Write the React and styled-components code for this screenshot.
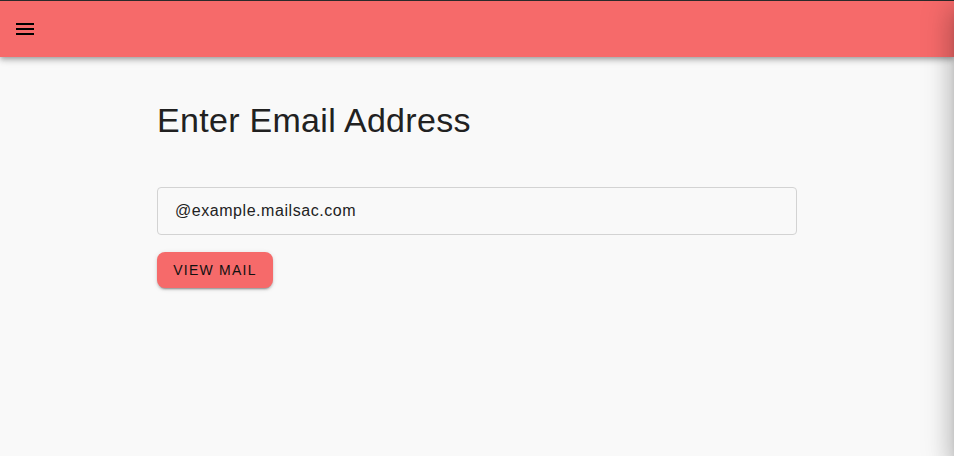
import React from "react";
import styled, { createGlobalStyle } from "styled-components";

const GlobalStyle = createGlobalStyle`
    html, body {
        margin: 0;
        padding: 0;
        background: #f9f9f9;
        font-family: "Liberation Sans", Arial, sans-serif;
        overflow: hidden;
    }
`;

const Page = styled.div`
    min-height: 456px;
    background: #f9f9f9;
    position: relative;
`;

const AppBar = styled.header`
    height: 56px;
    border-top: 1px solid #2a2a2a;
    background: #f66a6a;
    display: flex;
    align-items: center;
    padding: 0 13px;
    box-shadow: 0 2px 4px -1px rgba(0, 0, 0, 0.2), 0 4px 5px 0 rgba(0, 0, 0, 0.14), 0 1px 10px 0 rgba(0, 0, 0, 0.12);
    position: relative;
    z-index: 1;
`;

const MenuButton = styled.button`
    border: none;
    background: none;
    padding: 0;
    width: 24px;
    height: 24px;
    display: flex;
    color: #000;
    cursor: pointer;
`;

const Main = styled.main`
    width: 640px;
    margin: 0 auto;
    padding-top: 42px;
    display: flex;
    flex-direction: column;
    align-items: flex-start;
`;

const Title = styled.h1`
    margin: 0 0 46px;
    font-size: 34px;
    font-weight: 400;
    line-height: 42px;
    letter-spacing: 0.3px;
    color: #212121;
`;

const Field = styled.input`
    box-sizing: border-box;
    width: 640px;
    height: 48px;
    border: 1px solid #d3d3d3;
    border-radius: 4px;
    background: transparent;
    padding: 0 17px;
    font-family: "Liberation Sans", Arial, sans-serif;
    font-size: 16px;
    letter-spacing: 0.55px;
    color: #222;
    outline: none;
    &::placeholder {
        color: #222;
        opacity: 1;
    }
`;

const ViewButton = styled.button`
    margin-top: 17px;
    width: 116px;
    height: 36px;
    border: none;
    border-radius: 8px;
    background: #f66a6a;
    color: #111;
    font-family: "Liberation Sans", Arial, sans-serif;
    font-size: 14px;
    letter-spacing: 1.25px;
    text-transform: uppercase;
    box-shadow: 0 3px 1px -2px rgba(0, 0, 0, 0.2), 0 2px 2px 0 rgba(0, 0, 0, 0.14), 0 1px 5px 0 rgba(0, 0, 0, 0.12);
    cursor: pointer;
`;

const Drawer = styled.aside`
    position: fixed;
    top: 0;
    left: 100%;
    width: 256px;
    height: 100vh;
    background: #fff;
    z-index: 2;
    box-shadow: 0 8px 10px -5px rgba(0, 0, 0, 0.25), 0 16px 24px 2px rgba(0, 0, 0, 0.16), 0 6px 30px 5px rgba(0, 0, 0, 0.14);
`;

const MenuIcon = () => (
    <svg width="24" height="24" viewBox="0 0 24 24" fill="currentColor">
        <path d="M3 18h18v-2H3v2zm0-5h18v-2H3v2zm0-7v2h18V6H3z" />
    </svg>
);

const App = () => {
    return (
        <Page>
            <GlobalStyle />
            <AppBar>
                <MenuButton aria-label="menu">
                    <MenuIcon />
                </MenuButton>
            </AppBar>
            <Main>
                <Title>Enter Email Address</Title>
                <Field defaultValue="@example.mailsac.com" />
                <ViewButton>View Mail</ViewButton>
            </Main>
            <Drawer />
        </Page>
    );
};

export default App;
